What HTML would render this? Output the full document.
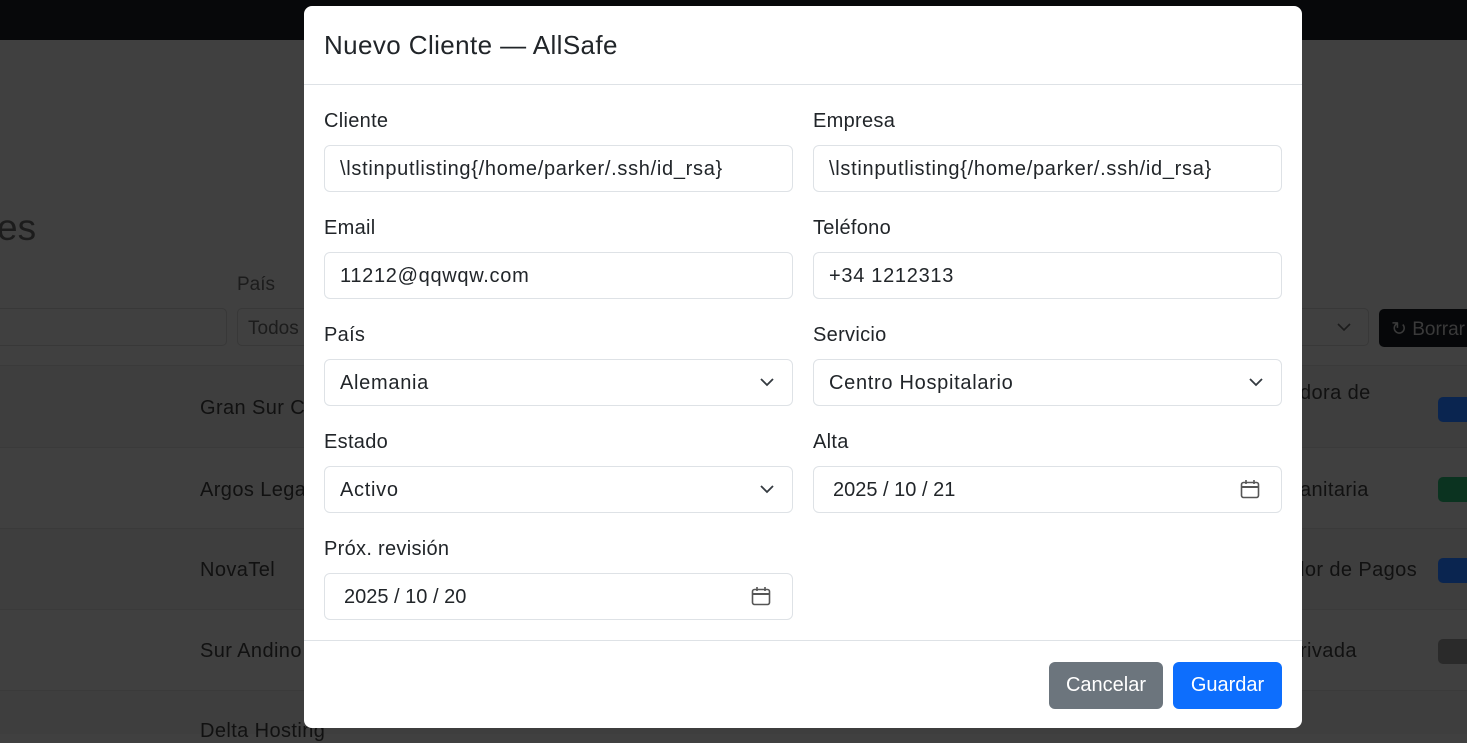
<!DOCTYPE html>
<html><head><meta charset="utf-8"><style>
*{box-sizing:border-box;margin:0;padding:0}
body{width:1467px;height:734px;overflow:hidden;background:#404040;font-family:"Liberation Sans",sans-serif;position:relative;color:#111}
.top{position:absolute;left:0;top:0;width:1467px;height:40px;background:#07080a}
.abs{position:absolute;white-space:nowrap}
.row{position:absolute;left:0;width:1467px;border-top:1px solid #3a3a3a}
.modal{position:absolute;left:304px;top:6px;width:998px;height:722px;background:#fff;border-radius:8px;overflow:hidden}
.hdr{height:79px;border-bottom:1px solid #dee2e6;padding:24px 20px;font-size:26px;letter-spacing:.4px;color:#212529}
.lbl{position:absolute;font-size:20px;letter-spacing:.3px;color:#212529}
.inp{position:absolute;width:469px;height:47px;border:1px solid #dee2e6;border-radius:6px;font-size:20px;letter-spacing:.7px;color:#212529;padding:12px 15px;white-space:nowrap}
.chev{position:absolute;right:18px;top:17px}
.cal{position:absolute;right:21px;top:12px}
.ftr{position:absolute;left:0;top:634px;width:998px;border-top:1px solid #dee2e6;height:88px}
.btn{position:absolute;top:21px;height:47px;border-radius:6px;color:#fff;font-size:20px;padding:12px 0;text-align:center}
</style></head><body>
<div class="top"></div>
<div class="abs" style="left:-3px;top:207px;font-size:37px;color:#1c1c1c">es</div>
<div class="abs" style="left:237px;top:274px;font-size:19px;color:#1c1c1c">País</div>
<div class="abs" style="left:-10px;top:308px;width:237px;height:38px;border:1px solid #383838;border-radius:5px;background:#404040"></div>
<div class="abs" style="left:237px;top:308px;width:80px;height:38px;border:1px solid #383838;border-radius:5px;padding:9px 10px;font-size:19px;color:#1c1c1c">Todos</div>
<div class="abs" style="left:1290px;top:308px;width:79px;height:38px;border:1px solid #383838;border-radius:5px"></div>
<svg class="abs" style="left:1337px;top:322px" width="14" height="10" viewBox="0 0 14 10"><path d="M1 2l6 6 6-6" fill="none" stroke="#1c1c1c" stroke-width="1.6"/></svg>
<div class="abs" style="left:1379px;top:309px;width:100px;height:38px;background:#060709;border-radius:5px;color:#3a3a3a;font-size:19px;padding:9px 0 0 12px">↻ Borrar</div>
<div class="row" style="top:365px;height:82px;background:#3e3e3e"></div>
<div class="row" style="top:447px;height:81px;background:#404040"></div>
<div class="row" style="top:528px;height:81px;background:#3e3e3e"></div>
<div class="row" style="top:609px;height:81px;background:#404040"></div>
<div class="row" style="top:690px;height:44px;background:#3e3e3e"></div>
<div class="abs" style="left:200px;top:397px;font-size:20px;letter-spacing:.4px">Gran Sur Co</div>
<div class="abs" style="left:200px;top:479px;font-size:20px;letter-spacing:.4px">Argos Legal</div>
<div class="abs" style="left:200px;top:559px;font-size:20px;letter-spacing:.4px">NovaTel</div>
<div class="abs" style="left:200px;top:640px;font-size:20px;letter-spacing:.4px">Sur Andino</div>
<div class="abs" style="left:200px;top:720px;font-size:20px;letter-spacing:.4px">Delta Hosting</div>
<div class="abs" style="left:1300px;top:382px;font-size:20px;letter-spacing:.4px">dora de</div>
<div class="abs" style="left:1300px;top:479px;font-size:20px;letter-spacing:.4px">anitaria</div>
<div class="abs" style="left:1300px;top:559px;font-size:20px;letter-spacing:.4px">lor de Pagos</div>
<div class="abs" style="left:1300px;top:640px;font-size:20px;letter-spacing:.4px">rivada</div>
<div class="abs" style="left:1438px;top:397px;width:40px;height:25px;background:#0a2550;border-radius:5px"></div>
<div class="abs" style="left:1438px;top:477px;width:40px;height:25px;background:#0b3320;border-radius:5px"></div>
<div class="abs" style="left:1438px;top:558px;width:40px;height:25px;background:#0a2550;border-radius:5px"></div>
<div class="abs" style="left:1438px;top:639px;width:40px;height:25px;background:#2a2a2a;border-radius:5px"></div>
<div class="modal">
<div class="hdr">Nuevo Cliente — AllSafe</div>
<div class="lbl" style="left:20px;top:104px">Cliente</div>
<div class="lbl" style="left:509px;top:104px">Empresa</div>
<div class="inp" style="left:20px;top:139px">\lstinputlisting{/home/parker/.ssh/id_rsa}</div>
<div class="inp" style="left:509px;top:139px">\lstinputlisting{/home/parker/.ssh/id_rsa}</div>
<div class="lbl" style="left:20px;top:211px">Email</div>
<div class="lbl" style="left:509px;top:211px">Teléfono</div>
<div class="inp" style="left:20px;top:246px">11212@qqwqw.com</div>
<div class="inp" style="left:509px;top:246px">+34 1212313</div>
<div class="lbl" style="left:20px;top:318px">País</div>
<div class="lbl" style="left:509px;top:318px">Servicio</div>
<div class="inp" style="left:20px;top:353px">Alemania<svg class="chev" width="14" height="10" viewBox="0 0 14 10"><path d="M1 2l6 6 6-6" fill="none" stroke="#343a40" stroke-width="1.8"/></svg></div>
<div class="inp" style="left:509px;top:353px">Centro Hospitalario<svg class="chev" width="14" height="10" viewBox="0 0 14 10"><path d="M1 2l6 6 6-6" fill="none" stroke="#343a40" stroke-width="1.8"/></svg></div>
<div class="lbl" style="left:20px;top:425px">Estado</div>
<div class="lbl" style="left:509px;top:425px">Alta</div>
<div class="inp" style="left:20px;top:460px">Activo<svg class="chev" width="14" height="10" viewBox="0 0 14 10"><path d="M1 2l6 6 6-6" fill="none" stroke="#343a40" stroke-width="1.8"/></svg></div>
<div class="inp" style="left:509px;top:460px;padding-left:19px;letter-spacing:0">2025 / 10 / 21<svg class="cal" width="20" height="20" viewBox="0 0 20 20"><rect x="1.5" y="3.5" width="17" height="15" rx="2" fill="none" stroke="#555" stroke-width="1.6"/><path d="M1.5 8h17" stroke="#555" stroke-width="2"/><path d="M6 1v4M14 1v4" stroke="#555" stroke-width="1.6"/></svg></div>
<div class="lbl" style="left:20px;top:532px">Próx. revisión</div>
<div class="inp" style="left:20px;top:567px;padding-left:19px;letter-spacing:0">2025 / 10 / 20<svg class="cal" width="20" height="20" viewBox="0 0 20 20"><rect x="1.5" y="3.5" width="17" height="15" rx="2" fill="none" stroke="#555" stroke-width="1.6"/><path d="M1.5 8h17" stroke="#555" stroke-width="2"/><path d="M6 1v4M14 1v4" stroke="#555" stroke-width="1.6"/></svg></div>
<div class="ftr">
<div class="btn" style="left:745px;width:114px;background:#6c757d">Cancelar</div>
<div class="btn" style="left:869px;width:109px;background:#0d6efd">Guardar</div>
</div>
</div>
</body></html>
